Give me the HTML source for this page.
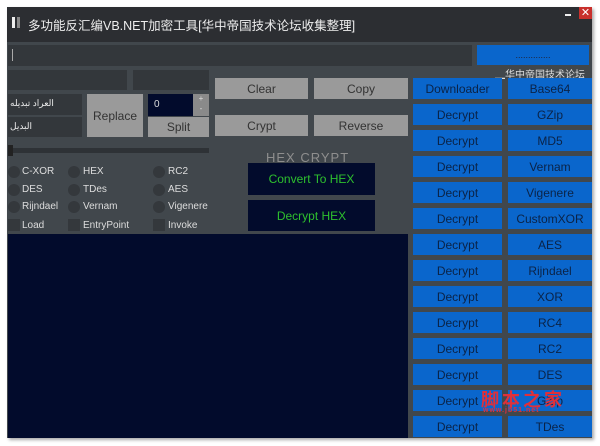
<!DOCTYPE html>
<html><head><meta charset="utf-8"><style>
*{margin:0;padding:0;box-sizing:border-box}
body{width:600px;height:446px;background:#fff;position:relative;overflow:hidden;font-family:"Liberation Sans","Noto Sans CJK SC",sans-serif}
div{position:absolute}
.win{left:7px;top:7px;width:585px;height:431px;background:#41474c;box-shadow:2px 2px 3px #aaa}
.g{background:#9a9a9a;color:#333;font-size:12px;display:flex;align-items:center;justify-content:center}
.b{background:#0a66cc;color:#0b2347;font-size:12px;display:flex;align-items:center;justify-content:center}
.d{background:#33373b}
.r{width:12px;height:12px;border-radius:50%;background:#34383c}
.s{width:12px;height:12px;background:#34383c}
.l{font-size:10px;color:#ddd}
</style></head><body>
<div class="win"></div>
<div style="left:7px;top:7px;width:585px;height:35px;background:#2c2e32"></div>
<div style="left:12px;top:17px;width:3px;height:11px;background:#eee"></div>
<div style="left:17px;top:17px;width:3px;height:11px;background:#888"></div>
<div style="left:28px;top:15px;font-size:12.5px;color:#eee;white-space:nowrap">多功能反汇编VB.NET加密工具[华中帝国技术论坛收集整理]</div>
<div style="left:565px;top:14px;width:6px;height:2px;background:#eee"></div>
<div style="left:579px;top:7px;width:13px;height:12px;background:#c8302c;color:#fff;font-size:11px;line-height:12px;text-align:center">✕</div>
<div class="d" style="left:8px;top:45px;width:464px;height:21px"></div>
<div style="left:12px;top:49px;width:1px;height:12px;background:#aaa"></div>
<div class="b" style="left:477px;top:45px;width:112px;height:20px;color:#223;font-size:9px">..............</div>
<div style="left:495px;top:66px;font-size:10px;color:#ddd;white-space:nowrap">▁华中帝国技术论坛</div>
<div class="d" style="left:8px;top:70px;width:119px;height:20px"></div>
<div class="d" style="left:133px;top:70px;width:76px;height:20px"></div>
<div class="d" style="left:8px;top:94px;width:74px;height:21px;color:#eee;font-size:9px;padding:4px 0 0 2px">العراد تبديله</div>
<div class="d" style="left:8px;top:117px;width:74px;height:20px;color:#eee;font-size:9px;padding:4px 0 0 2px">البديل</div>
<div class="g" style="left:87px;top:94px;width:56px;height:43px">Replace</div>
<div style="left:148px;top:94px;width:45px;height:22px;background:#020b2c;color:#ddd;font-size:10px;padding:5px 0 0 6px">0</div>
<div style="left:193px;top:94px;width:16px;height:22px;background:#8a8a8a;color:#ddd;font-size:8px;text-align:center;line-height:10px">+<br>-</div>
<div class="g" style="left:148px;top:117px;width:61px;height:20px">Split</div>
<div class="g" style="left:215px;top:78px;width:93px;height:21px">Clear</div>
<div class="g" style="left:314px;top:78px;width:94px;height:21px">Copy</div>
<div class="g" style="left:215px;top:115px;width:93px;height:21px">Crypt</div>
<div class="g" style="left:314px;top:115px;width:94px;height:21px">Reverse</div>
<div style="left:8px;top:148px;width:201px;height:5px;background:#2e3236"></div>
<div style="left:8px;top:145px;width:5px;height:11px;background:#222"></div>
<div style="left:266px;top:150px;font-size:13px;color:#8e8e8e;letter-spacing:1px">HEX CRYPT</div>
<div style="left:248px;top:163px;width:127px;height:32px;background:#020b2c;color:#2ec02e;font-size:12px;display:flex;align-items:center;justify-content:center">Convert To HEX</div>
<div style="left:248px;top:200px;width:127px;height:31px;background:#020b2c;color:#2ec02e;font-size:12px;display:flex;align-items:center;justify-content:center">Decrypt HEX</div>
<div class="r" style="left:8px;top:166px"></div><div class="l" style="left:22px;top:166px">C-XOR</div>
<div class="r" style="left:68px;top:166px"></div><div class="l" style="left:83px;top:166px">HEX</div>
<div class="r" style="left:153px;top:166px"></div><div class="l" style="left:168px;top:166px">RC2</div>
<div class="r" style="left:8px;top:184px"></div><div class="l" style="left:22px;top:184px">DES</div>
<div class="r" style="left:68px;top:184px"></div><div class="l" style="left:83px;top:184px">TDes</div>
<div class="r" style="left:153px;top:184px"></div><div class="l" style="left:168px;top:184px">AES</div>
<div class="r" style="left:8px;top:201px"></div><div class="l" style="left:22px;top:201px">Rijndael</div>
<div class="r" style="left:68px;top:201px"></div><div class="l" style="left:83px;top:201px">Vernam</div>
<div class="r" style="left:153px;top:201px"></div><div class="l" style="left:168px;top:201px">Vigenere</div>
<div class="s" style="left:8px;top:219px"></div><div class="l" style="left:22px;top:220px">Load</div>
<div class="s" style="left:68px;top:219px"></div><div class="l" style="left:83px;top:220px">EntryPoint</div>
<div class="s" style="left:153px;top:219px"></div><div class="l" style="left:168px;top:220px">Invoke</div>
<div style="left:8px;top:234px;width:400px;height:204px;background:#020b2c"></div>
<div class="b" style="left:413px;top:78px;width:89px;height:21px">Downloader</div><div class="b" style="left:508px;top:78px;width:84px;height:21px">Base64</div>
<div class="b" style="left:413px;top:104px;width:89px;height:21px">Decrypt</div><div class="b" style="left:508px;top:104px;width:84px;height:21px">GZip</div>
<div class="b" style="left:413px;top:130px;width:89px;height:21px">Decrypt</div><div class="b" style="left:508px;top:130px;width:84px;height:21px">MD5</div>
<div class="b" style="left:413px;top:156px;width:89px;height:21px">Decrypt</div><div class="b" style="left:508px;top:156px;width:84px;height:21px">Vernam</div>
<div class="b" style="left:413px;top:182px;width:89px;height:21px">Decrypt</div><div class="b" style="left:508px;top:182px;width:84px;height:21px">Vigenere</div>
<div class="b" style="left:413px;top:208px;width:89px;height:21px">Decrypt</div><div class="b" style="left:508px;top:208px;width:84px;height:21px">CustomXOR</div>
<div class="b" style="left:413px;top:234px;width:89px;height:21px">Decrypt</div><div class="b" style="left:508px;top:234px;width:84px;height:21px">AES</div>
<div class="b" style="left:413px;top:260px;width:89px;height:21px">Decrypt</div><div class="b" style="left:508px;top:260px;width:84px;height:21px">Rijndael</div>
<div class="b" style="left:413px;top:286px;width:89px;height:21px">Decrypt</div><div class="b" style="left:508px;top:286px;width:84px;height:21px">XOR</div>
<div class="b" style="left:413px;top:312px;width:89px;height:21px">Decrypt</div><div class="b" style="left:508px;top:312px;width:84px;height:21px">RC4</div>
<div class="b" style="left:413px;top:338px;width:89px;height:21px">Decrypt</div><div class="b" style="left:508px;top:338px;width:84px;height:21px">RC2</div>
<div class="b" style="left:413px;top:364px;width:89px;height:21px">Decrypt</div><div class="b" style="left:508px;top:364px;width:84px;height:21px">DES</div>
<div class="b" style="left:413px;top:390px;width:89px;height:21px">Decrypt</div><div class="b" style="left:508px;top:390px;width:84px;height:21px">GZip</div>
<div class="b" style="left:413px;top:416px;width:89px;height:21px">Decrypt</div><div class="b" style="left:508px;top:416px;width:84px;height:21px">TDes</div>
<div style="left:481px;top:386px;font-size:18px;color:#e0303a;font-family:'Noto Sans CJK SC',sans-serif;font-weight:bold;letter-spacing:3px;white-space:nowrap">脚本之家</div>
<div style="left:483px;top:407px;font-size:7px;color:#e0303a;font-weight:bold;letter-spacing:1px;white-space:nowrap">www.jb51.net</div>
</body></html>
